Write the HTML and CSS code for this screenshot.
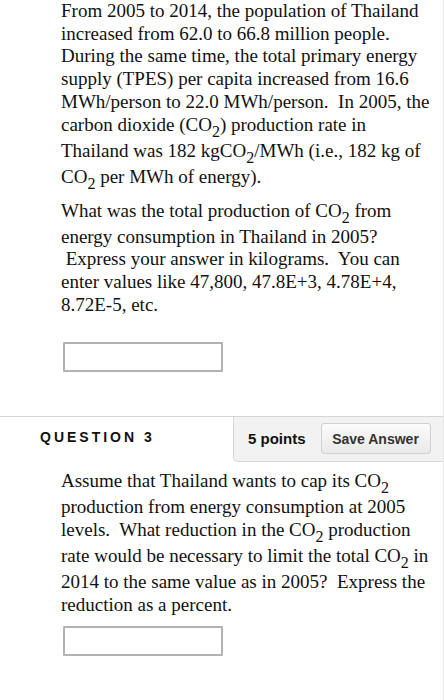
FILE: index.html
```html
<!DOCTYPE html>
<html>
<head>
<meta charset="utf-8">
<link rel="stylesheet" href="styles.css">
</head>
<body>
<div class="page">
  <div class="qbody">
    <p class="para">From 2005 to 2014, the population of Thailand<br>increased from 62.0 to 66.8 million people.<br>During the same time, the total primary energy<br>supply (TPES) per capita increased from 16.6<br>MWh/person to 22.0 MWh/person.&nbsp; In 2005, the<br>carbon dioxide (CO<sub>2</sub>) production rate in<br>Thailand was 182 kgCO<sub>2</sub>/MWh (i.e., 182 kg of<br>CO<sub>2</sub> per MWh of energy).</p>
    <p class="para">What was the total production of CO<sub>2</sub> from<br>energy consumption in Thailand in 2005?<br>&nbsp;Express your answer in kilograms.&nbsp; You can<br>enter values like 47,800, 47.8E+3, 4.78E+4,<br>8.72E-5, etc.</p>
    <div class="answer first"><input type="text" class="field"></div>
  </div>

  <div class="qhead">
    <div class="qtitle">QUESTION 3</div>
    <div class="qpanel">
      <span class="points">5 points</span>
      <button class="save">Save Answer</button>
    </div>
  </div>

  <div class="qbody second">
    <p class="para">Assume that Thailand wants to cap its CO<sub>2</sub><br>production from energy consumption at 2005<br>levels.&nbsp; What reduction in the CO<sub>2</sub> production<br>rate would be necessary to limit the total CO<sub>2</sub> in<br>2014 to the same value as in 2005?&nbsp; Express the<br>reduction as a percent.</p>
    <div class="answer"><input type="text" class="field"></div>
  </div>
</div>
</body>
</html>
```

FILE: styles.css
```css
html, body {
  margin: 0;
  padding: 0;
  background: #ffffff;
}

.page {
  width: 444px;
  min-height: 700px;
  border-right: 1px solid #e6e6e6;
  box-sizing: border-box;
}

.qbody {
  padding: 0 4px 0 61px;
}

.para {
  margin: 0 0 8px 0;
  font-family: "Liberation Serif", "Times New Roman", serif;
  font-size: 19px;
  line-height: 22.7px;
  color: #111;
}

.para sub {
  font-size: 16px;
  line-height: 16px;
  vertical-align: -6px;
}

.answer {
  padding: 2px 0 0 2px;
}

.answer.first {
  padding-top: 18px;
  padding-bottom: 44px;
}

.field {
  display: block;
  width: 160px;
  height: 30px;
  box-sizing: border-box;
  border: 2px solid #b3b3b3;
  border-radius: 1px;
  background: #fff;
  margin: 0;
  padding: 0;
}

.qhead {
  display: flex;
  border-top: 1px solid #d4d4d4;
  font-family: "Liberation Sans", Arial, sans-serif;
}

.qtitle {
  flex: 1;
  padding: 12px 0 0 40px;
  font-weight: bold;
  font-size: 14px;
  letter-spacing: 3px;
  color: #111;
}

.qpanel {
  display: flex;
  align-items: center;
  gap: 15px;
  padding: 6px 12px 7px 14px;
  background: #f2f2f2;
  border-left: 1px solid #d6d6d6;
  border-bottom: 1px solid #d6d6d6;
  border-bottom-left-radius: 5px;
  width: 210px;
  box-sizing: border-box;
}

.points {
  font-weight: bold;
  font-size: 15px;
  color: #111;
}

.save {
  font-family: "Liberation Sans", Arial, sans-serif;
  font-weight: bold;
  font-size: 14px;
  color: #333;
  height: 31px;
  width: 110px;
  padding: 0;
  border: 1px solid #d0d0d0;
  border-radius: 3px;
  background: linear-gradient(#fbfbfb, #e9e9e9);
}

.qbody.second {
  padding-top: 8px;
}
```
